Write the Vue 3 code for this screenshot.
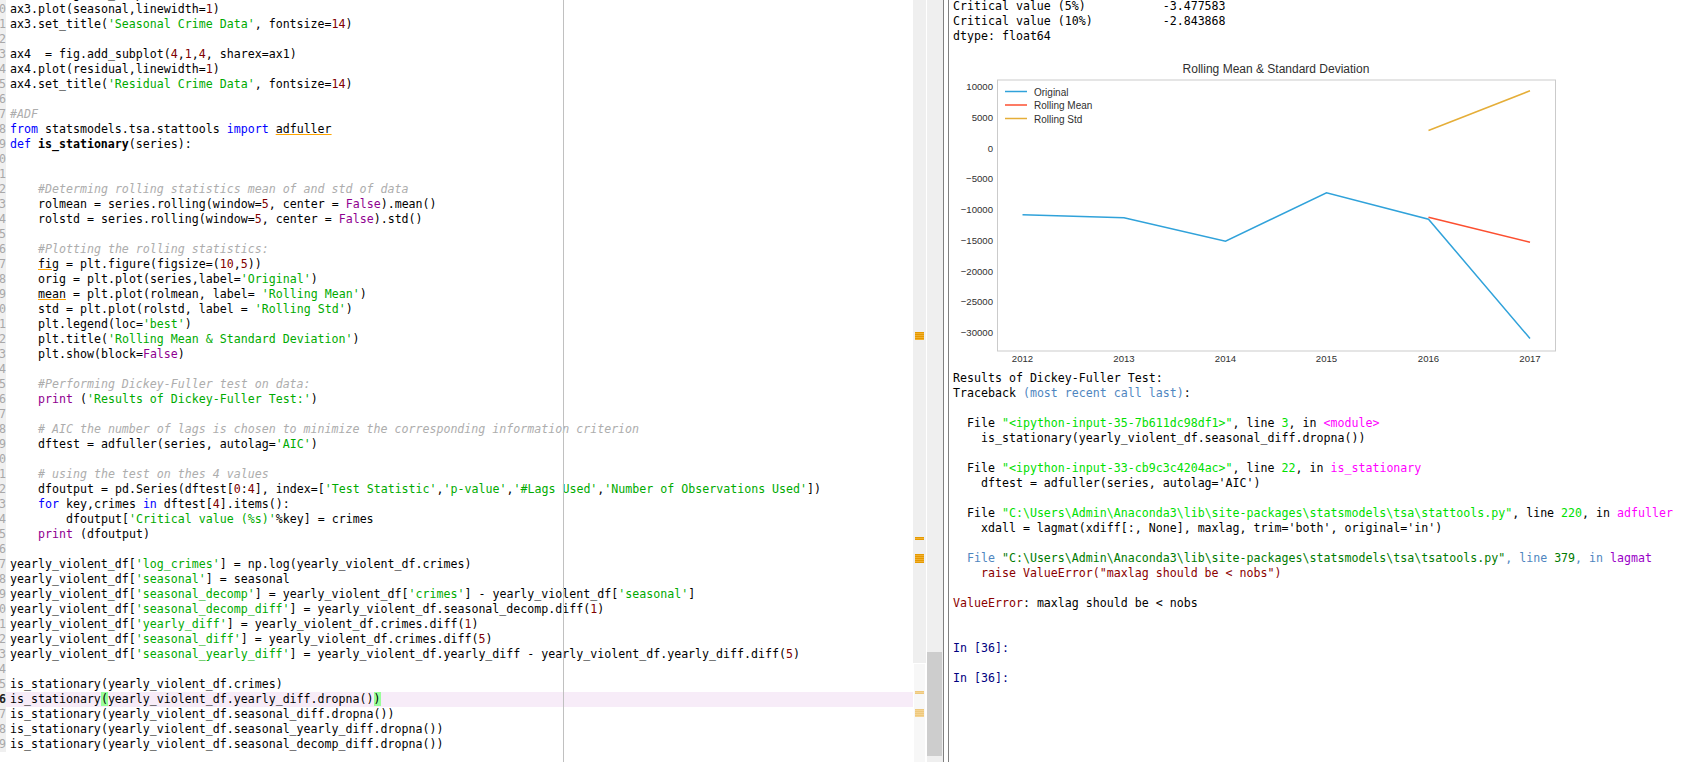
<template>
  <div class="ide">
    <div class="editor">
      <div class="code">
        <div
          v-for="(line, i) in codeLines"
          :key="i"
          class="row"
          :class="{ current: line.current }"
        >
          <span class="num">{{ (i + 9) % 10 }}</span>
          <span class="src"><span
            v-for="(tok, j) in line.tokens"
            :key="j"
            :class="tok.cls"
          >{{ tok.text }}</span></span>
        </div>
      </div>
      <div class="edge"></div>
    </div>

    <div class="flags">
      <div class="flags-view"></div>
      <span
        v-for="f in flags"
        :key="f.top"
        class="flag"
        :class="{ faded: f.faded }"
        :style="{ top: f.top + 'px', height: f.height + 'px' }"
      ></span>
    </div>
    <div class="scrollbar"><div class="thumb"></div></div>

    <div class="splitter"></div>

    <div class="console">
      <div v-for="(line, i) in outputTop" :key="'t' + i" class="out">{{ line }}</div>

      <svg class="chart" width="640" height="327" viewBox="949 43.5 640 327">
        <text class="title" x="1276" y="72.5" text-anchor="middle">Rolling Mean &amp; Standard Deviation</text>
        <rect class="frame" x="997.5" y="79.5" width="558" height="271" />
        <text
          v-for="t in yTicks"
          :key="t.label"
          class="tick"
          x="993"
          :y="t.y + 3"
          text-anchor="end"
        >{{ t.label }}</text>
        <text
          v-for="t in xTicks"
          :key="t.label"
          class="tick"
          :x="t.x"
          y="361.5"
          text-anchor="middle"
        >{{ t.label }}</text>
        <polyline
          v-for="s in series"
          :key="s.label"
          class="curve"
          :points="s.points"
          :stroke="s.color"
        />
        <g v-for="s in series" :key="'l' + s.label">
          <line class="curve" x1="1005" x2="1027" :y1="s.legendY" :y2="s.legendY" :stroke="s.color" />
          <text class="legend" x="1034" :y="s.legendY + 4">{{ s.label }}</text>
        </g>
      </svg>

      <div v-for="(line, i) in outputBottom" :key="'b' + i" class="out"><span
        v-for="(part, j) in line"
        :key="j"
        :class="part[1]"
      >{{ part[0] }}</span></div>
    </div>
  </div>
</template>

<script setup>
const source = [
  "ax3  = fig.add_subplot(4,1,3, sharex=ax1)",
  "ax3.plot(seasonal,linewidth=1)",
  "ax3.set_title('Seasonal Crime Data', fontsize=14)",
  "",
  "ax4  = fig.add_subplot(4,1,4, sharex=ax1)",
  "ax4.plot(residual,linewidth=1)",
  "ax4.set_title('Residual Crime Data', fontsize=14)",
  "",
  "#ADF",
  "from statsmodels.tsa.stattools import adfuller",
  "def is_stationary(series):",
  "",
  "",
  "    #Determing rolling statistics mean of and std of data",
  "    rolmean = series.rolling(window=5, center = False).mean()",
  "    rolstd = series.rolling(window=5, center = False).std()",
  "",
  "    #Plotting the rolling statistics:",
  "    fig = plt.figure(figsize=(10,5))",
  "    orig = plt.plot(series,label='Original')",
  "    mean = plt.plot(rolmean, label= 'Rolling Mean')",
  "    std = plt.plot(rolstd, label = 'Rolling Std')",
  "    plt.legend(loc='best')",
  "    plt.title('Rolling Mean & Standard Deviation')",
  "    plt.show(block=False)",
  "",
  "    #Performing Dickey-Fuller test on data:",
  "    print ('Results of Dickey-Fuller Test:')",
  "",
  "    # AIC the number of lags is chosen to minimize the corresponding information criterion",
  "    dftest = adfuller(series, autolag='AIC')",
  "",
  "    # using the test on thes 4 values",
  "    dfoutput = pd.Series(dftest[0:4], index=['Test Statistic','p-value','#Lags Used','Number of Observations Used'])",
  "    for key,crimes in dftest[4].items():",
  "        dfoutput['Critical value (%s)'%key] = crimes",
  "    print (dfoutput)",
  "",
  "yearly_violent_df['log_crimes'] = np.log(yearly_violent_df.crimes)",
  "yearly_violent_df['seasonal'] = seasonal",
  "yearly_violent_df['seasonal_decomp'] = yearly_violent_df['crimes'] - yearly_violent_df['seasonal']",
  "yearly_violent_df['seasonal_decomp_diff'] = yearly_violent_df.seasonal_decomp.diff(1)",
  "yearly_violent_df['yearly_diff'] = yearly_violent_df.crimes.diff(1)",
  "yearly_violent_df['seasonal_diff'] = yearly_violent_df.crimes.diff(5)",
  "yearly_violent_df['seasonal_yearly_diff'] = yearly_violent_df.yearly_diff - yearly_violent_df.yearly_diff.diff(5)",
  "",
  "is_stationary(yearly_violent_df.crimes)",
  "is_stationary(yearly_violent_df.yearly_diff.dropna())",
  "is_stationary(yearly_violent_df.seasonal_diff.dropna())",
  "is_stationary(yearly_violent_df.seasonal_yearly_diff.dropna())",
  "is_stationary(yearly_violent_df.seasonal_decomp_diff.dropna())"
]

const keywords = ['from', 'import', 'def', 'for', 'in']
const builtins = ['print', 'False']
// names the editor underlines as unused
const warned = { 9: 'adfuller', 18: 'fig', 20: 'mean' }
const currentLine = 47
const matchedBrackets = [13, 52]

function highlight(text, lineNo) {
  const tokens = []
  const re = /#.*$|'[^']*'|\w+|\W/g
  let m
  let afterDef = false
  while ((m = re.exec(text))) {
    const word = m[0]
    let cls = ''
    if (word[0] === '#') cls = 'comment'
    else if (word[0] === "'") cls = 'string'
    else if (keywords.includes(word)) cls = 'keyword'
    else if (builtins.includes(word)) cls = 'builtin'
    else if (/^\d+$/.test(word)) cls = 'number'
    else if (afterDef && /\w/.test(word)) cls = 'defname'
    if (warned[lineNo] === word) cls = 'warn'
    if (lineNo === currentLine && matchedBrackets.includes(m.index)) cls = 'match'
    if (word === 'def') afterDef = true
    else if (/\w/.test(word)) afterDef = false
    tokens.push({ text: word, cls })
  }
  return tokens
}

const codeLines = source.map((text, i) => ({
  tokens: highlight(text, i),
  current: i === currentLine
}))

const flags = [
  { top: 332, height: 8 },
  { top: 537, height: 3 },
  { top: 554, height: 9 },
  { top: 691, height: 3, faded: true },
  { top: 709, height: 8, faded: true }
]

const outputTop = [
  'Critical value (5%)           -3.477583',
  'Critical value (10%)          -2.843868',
  'dtype: float64'
]

const yTicks = [
  { label: '10000', y: 86.5 },
  { label: '5000', y: 117.3 },
  { label: '0', y: 148 },
  { label: '\u22125000', y: 178.7 },
  { label: '\u221210000', y: 209.5 },
  { label: '\u221215000', y: 240.3 },
  { label: '\u221220000', y: 271 },
  { label: '\u221225000', y: 301.7 },
  { label: '\u221230000', y: 332.5 }
]

const xTicks = [
  { label: '2012', x: 1022.5 },
  { label: '2013', x: 1124 },
  { label: '2014', x: 1225.5 },
  { label: '2015', x: 1326.5 },
  { label: '2016', x: 1428.5 },
  { label: '2017', x: 1530 }
]

const series = [
  {
    label: 'Original',
    color: '#30a2da',
    legendY: 91,
    points: '1022.5,214.3 1124,217.3 1225.5,240.7 1326.5,192.3 1428.5,218.7 1530,338'
  },
  {
    label: 'Rolling Mean',
    color: '#fc4f30',
    legendY: 104.5,
    points: '1428.5,216.7 1530,241.7'
  },
  {
    label: 'Rolling Std',
    color: '#e5ae38',
    legendY: 118,
    points: '1428.5,130 1530,90.3'
  }
]

const outputBottom = [
  [['Results of Dickey-Fuller Test:', '']],
  [['Traceback ', ''], ['(most recent call last)', 'steel'], [':', '']],
  [[' ', '']],
  [['  File ', ''], ['"<ipython-input-35-7b611dc98df1>"', 'lime'], [', line ', ''], ['3', 'lime'], [', in ', ''], ['<module>', 'pink']],
  [['    is_stationary(yearly_violent_df.seasonal_diff.dropna())', '']],
  [[' ', '']],
  [['  File ', ''], ['"<ipython-input-33-cb9c3c4204ac>"', 'lime'], [', line ', ''], ['22', 'lime'], [', in ', ''], ['is_stationary', 'pink']],
  [["    dftest = adfuller(series, autolag='AIC')", '']],
  [[' ', '']],
  [['  File ', ''], ['"C:\\Users\\Admin\\Anaconda3\\lib\\site-packages\\statsmodels\\tsa\\stattools.py"', 'lime'], [', line ', ''], ['220', 'lime'], [', in ', ''], ['adfuller', 'pink']],
  [["    xdall = lagmat(xdiff[:, None], maxlag, trim='both', original='in')", '']],
  [[' ', '']],
  [['  File ', 'steel'], ['"C:\\Users\\Admin\\Anaconda3\\lib\\site-packages\\statsmodels\\tsa\\tsatools.py"', 'forest'], [', line ', 'steel'], ['379', 'forest'], [', in ', 'steel'], ['lagmat', 'violet']],
  [['    raise ValueError("maxlag should be < nobs")', 'maroon']],
  [[' ', '']],
  [['ValueError', 'maroon'], [': maxlag should be < nobs', '']],
  [[' ', '']],
  [[' ', '']],
  [['In [36]:', 'prompt']],
  [[' ', '']],
  [['In [36]:', 'prompt']]
]
</script>

<style scoped>
.ide {
  display: flex;
  width: 1707px;
  height: 762px;
  overflow: hidden;
  background: #fff;
  font-family: "DejaVu Sans Mono", "Liberation Mono", monospace;
  font-size: 11.62px;
  color: #000;
}

/* editor pane */
.editor {
  position: relative;
  flex: 0 0 913px;
  overflow: hidden;
}

.code {
  margin-top: -13.5px;
}

.row {
  display: flex;
  height: 15px;
  line-height: 15px;
  white-space: pre;
}

.row.current {
  background: #f7ecf8;
}

.num {
  flex: 0 0 6px;
  margin-right: 4px;
  overflow: hidden;
  direction: rtl;
  background: #f0f0f0;
  color: #a8a8a8;
}

.row.current .num {
  color: #222;
  font-weight: bold;
}

.comment {
  color: #adadad;
  font-style: italic;
}

.string {
  color: #00aa00;
}

.keyword {
  color: #0000ff;
}

.builtin {
  color: #900090;
}

.number {
  color: #800000;
}

.defname {
  font-weight: bold;
}

.warn {
  text-decoration: underline;
  text-decoration-color: #ffa500;
}

.match {
  background: #99ff99;
}

.edge {
  position: absolute;
  top: 0;
  bottom: 0;
  left: 563px;
  width: 1px;
  background: #c0c0c0;
}

/* scroll flags and scrollbar */
.flags {
  position: relative;
  flex: 0 0 14px;
  padding-top: 663px;
  box-sizing: border-box;
  background: #efefef;
  border-right: 1px solid #fff;
}

.flags-view {
  height: 99px;
  box-sizing: border-box;
  background: #f7f7f7;
  border: 1px solid #fff;
  border-bottom: none;
}

.flag {
  position: absolute;
  left: 2px;
  width: 9px;
  background: repeating-linear-gradient(#e59a00 0 1px, #f2b030 1px 2px);
}

.flag.faded {
  opacity: 0.5;
}

.scrollbar {
  flex: 0 0 16px;
  padding-top: 652px;
  box-sizing: border-box;
  background: #efefef;
}

.thumb {
  width: 15px;
  height: 104px;
  background: #cdcdcd;
}

.splitter {
  flex: 0 0 6px;
  box-sizing: border-box;
  background: #fff;
  border-left: 1px solid #808080;
  border-right: 1px solid #808080;
}

/* ipython console */
.console {
  flex: 1;
  min-width: 0;
  margin-top: -1.5px;
  padding-left: 4px;
  overflow: hidden;
}

.out {
  height: 15px;
  line-height: 15px;
  white-space: pre;
}

.chart {
  display: block;
  margin-left: -4px;
}

.title,
.tick,
.legend {
  font-family: "Liberation Sans", Arial, sans-serif;
  fill: #303030;
}

.title {
  font-size: 12px;
}

.tick {
  font-size: 9.6px;
}

.legend {
  font-size: 10px;
}

.frame {
  fill: none;
  stroke: #cbcbcb;
  stroke-width: 1;
}

.curve {
  fill: none;
  stroke-width: 1.5;
}

.steel {
  color: #4f86c0;
}

.lime {
  color: #00e000;
}

.pink {
  color: #ff00ff;
}

.forest {
  color: #007a00;
}

.violet {
  color: #9a00c8;
}

.maroon {
  color: #8b0000;
}

.prompt {
  color: #000080;
}
</style>
